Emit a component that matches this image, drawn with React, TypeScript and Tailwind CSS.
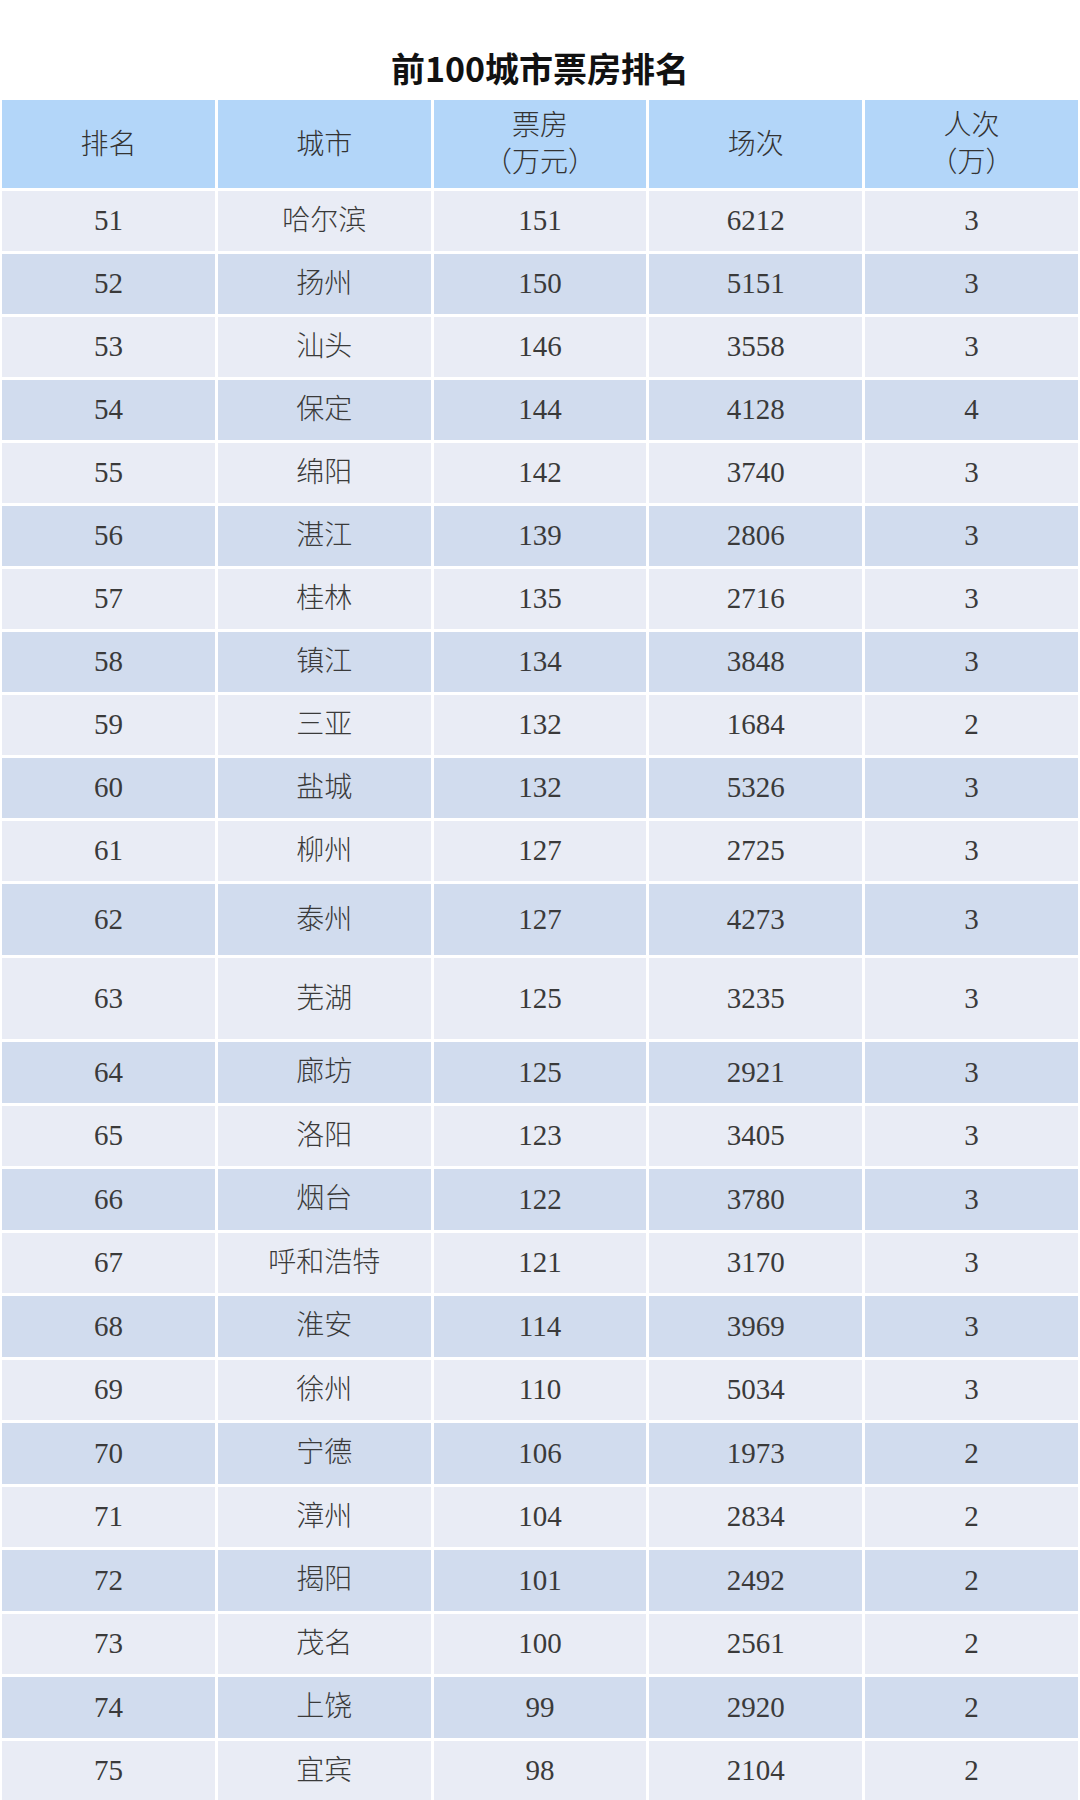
import React from "react";

const rows: [string, string, string, string, string, string][] = [
  ["51", "哈尔滨", "151", "6212", "3", "h-[60px]"],
  ["52", "扬州", "150", "5151", "3", "h-[60px]"],
  ["53", "汕头", "146", "3558", "3", "h-[60px]"],
  ["54", "保定", "144", "4128", "4", "h-[60px]"],
  ["55", "绵阳", "142", "3740", "3", "h-[60px]"],
  ["56", "湛江", "139", "2806", "3", "h-[60px]"],
  ["57", "桂林", "135", "2716", "3", "h-[60px]"],
  ["58", "镇江", "134", "3848", "3", "h-[60px]"],
  ["59", "三亚", "132", "1684", "2", "h-[60px]"],
  ["60", "盐城", "132", "5326", "3", "h-[60px]"],
  ["61", "柳州", "127", "2725", "3", "h-[60px]"],
  ["62", "泰州", "127", "4273", "3", "h-[71px]"],
  ["63", "芜湖", "125", "3235", "3", "h-[81px]"],
  ["64", "廊坊", "125", "2921", "3", "h-[60.5px]"],
  ["65", "洛阳", "123", "3405", "3", "h-[60.5px]"],
  ["66", "烟台", "122", "3780", "3", "h-[60.5px]"],
  ["67", "呼和浩特", "121", "3170", "3", "h-[60.5px]"],
  ["68", "淮安", "114", "3969", "3", "h-[60.5px]"],
  ["69", "徐州", "110", "5034", "3", "h-[60.5px]"],
  ["70", "宁德", "106", "1973", "2", "h-[60.5px]"],
  ["71", "漳州", "104", "2834", "2", "h-[60.5px]"],
  ["72", "揭阳", "101", "2492", "2", "h-[60.5px]"],
  ["73", "茂名", "100", "2561", "2", "h-[60.5px]"],
  ["74", "上饶", "99", "2920", "2", "h-[60.5px]"],
  ["75", "宜宾", "98", "2104", "2", "h-[60.5px]"],
];

const bodyFont = "font-['Liberation_Serif','Noto_Sans_CJK_SC',serif]";

function HeadCell({ lines }: { lines: string[] }) {
  return (
    <div className="bg-[#b3d6f9] flex flex-col items-center justify-center text-[28px] leading-[37px] font-light text-[#333333]">
      {lines.map((l) => (
        <span key={l}>{l}</span>
      ))}
    </div>
  );
}

export default function App() {
  return (
    <div className={`w-[1080px] min-h-[1800px] bg-white ${bodyFont}`}>
      <div className="h-[100px] pt-[50px] text-center text-[34px] leading-[36px] font-bold text-[#111111] font-['Noto_Sans_CJK_SC',sans-serif]">
        前100城市票房排名
      </div>
      <div className="px-[2px] flex flex-col gap-[3px]">
        <div className="grid grid-cols-5 gap-x-[3px] h-[88px]">
          <HeadCell lines={["排名"]} />
          <HeadCell lines={["城市"]} />
          <HeadCell lines={["票房", "（万元）"]} />
          <HeadCell lines={["场次"]} />
          <HeadCell lines={["人次", "（万）"]} />
        </div>
        {rows.map((r, i) => {
          const bg = i % 2 === 0 ? "bg-[#e9ecf5]" : "bg-[#d1dcee]";
          return (
            <div key={r[0]} className={`grid grid-cols-5 gap-x-[3px] ${r[5]}`}>
              {r.slice(0, 5).map((c, j) => (
                <div
                  key={j}
                  className={`${bg} flex items-center justify-center text-[#3a3a3a] ${
                    j === 1 ? "text-[28px] font-light" : "text-[29px]"
                  }`}
                >
                  {c}
                </div>
              ))}
            </div>
          );
        })}
      </div>
    </div>
  );
}
